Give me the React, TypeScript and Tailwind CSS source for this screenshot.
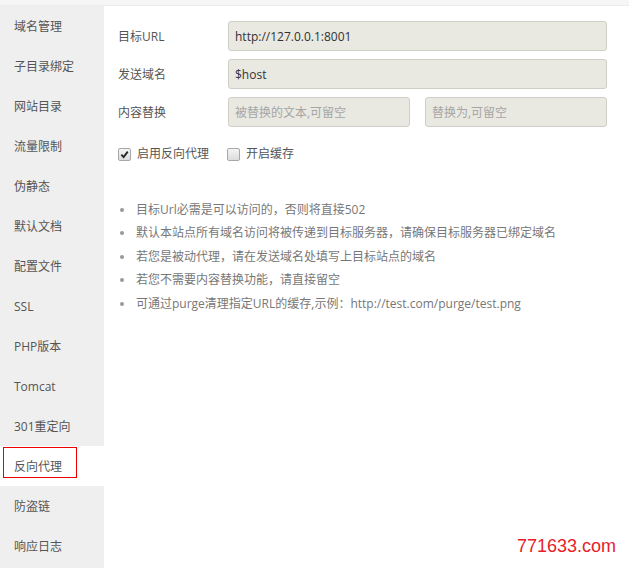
import React from "react";

const menu = [
  "域名管理",
  "子目录绑定",
  "网站目录",
  "流量限制",
  "伪静态",
  "默认文档",
  "配置文件",
  "SSL",
  "PHP版本",
  "Tomcat",
  "301重定向",
  "反向代理",
  "防盗链",
  "响应日志",
];

const tips = [
  "目标Url必需是可以访问的，否则将直接502",
  "默认本站点所有域名访问将被传递到目标服务器，请确保目标服务器已绑定域名",
  "若您是被动代理，请在发送域名处填写上目标站点的域名",
  "若您不需要内容替换功能，请直接留空",
  "可通过purge清理指定URL的缓存,示例：http://test.com/purge/test.png",
];

const font = {
  fontFamily: '"Open Sans", "Noto Sans CJK SC", sans-serif',
};

const Check = ({ checked }: { checked: boolean }) => (
  <span className="w-[13px] h-[13px] rounded-[2px] border border-[#a8a8a8] bg-gradient-to-b from-[#f4f4f4] to-[#dcdcdc] flex items-center justify-center">
    {checked && (
      <svg width="9" height="9" viewBox="0 0 10 10">
        <path d="M1.5 5.2 L4 7.8 L8.6 1.8" fill="none" stroke="#222" strokeWidth="2" />
      </svg>
    )}
  </span>
);

const Input = ({ value, placeholder, className }: { value?: string; placeholder?: string; className?: string }) => (
  <div
    className={
      "h-[30px] rounded-[3px] border border-[#cfcfc8] bg-[#e9e8e1] flex items-center px-[6px] pt-[1px] text-[12px] " +
      (value ? "text-[#333]" : "text-[#a6a6a6]") +
      " " +
      (className || "")
    }
  >
    {value || placeholder}
  </div>
);

export default function App() {
  return (
    <div className="w-[629px] h-[568px] bg-white flex flex-col relative overflow-hidden" style={font}>
      <div className="h-[6px] bg-[#f6f6f6] border-b border-[#ececec]" />
      <div className="flex flex-1">
        <div className="w-[104px] bg-[#efefef] flex flex-col">
          {menu.map((m) => (
            <div
              key={m}
              className={
                "h-[40px] flex items-center pl-[14px] pt-[2px] text-[12px] text-[#555] " +
                (m === "反向代理" ? "bg-white" : "")
              }
            >
              {m === "反向代理" ? (
                <span className="border border-[#e00] w-[74px] h-[31px] -ml-[11px] mt-[-10px] pl-[10px] pt-[10px]">{m}</span>
              ) : (
                m
              )}
            </div>
          ))}
        </div>
        <div className="flex-1 pl-[14px] pr-[22px] pt-[15px]">
          <div className="flex flex-col gap-[8px]">
            <div className="flex items-center">
              <span className="w-[110px] pt-[2px] text-[12px] text-[#555]">目标URL</span>
              <Input value="http://127.0.0.1:8001" className="flex-1" />
            </div>
            <div className="flex items-center">
              <span className="w-[110px] pt-[2px] text-[12px] text-[#555]">发送域名</span>
              <Input value="$host" className="flex-1" />
            </div>
            <div className="flex items-center">
              <span className="w-[110px] pt-[2px] text-[12px] text-[#555]">内容替换</span>
              <Input placeholder="被替换的文本,可留空" className="w-[182px]" />
              <Input placeholder="替换为,可留空" className="w-[182px] ml-[15px]" />
            </div>
          </div>
          <div className="flex items-center mt-[18px] text-[12px] text-[#555]">
            <Check checked />
            <span className="ml-[6px]">启用反向代理</span>
            <span className="ml-[18px]">
              <Check checked={false} />
            </span>
            <span className="ml-[6px]">开启缓存</span>
          </div>
          <ul className="mt-[35px] flex flex-col">
            {tips.map((t) => (
              <li key={t} className="h-[23.5px] flex items-center text-[12px] text-[#777]">
                <span className="w-[4px] h-[4px] rounded-full bg-[#999] ml-[2px] mr-[12px]" />
                {t}
              </li>
            ))}
          </ul>
        </div>
      </div>
      <div className="absolute right-[13px] bottom-[8px] text-[18px] text-[#e8202a]" style={{ fontFamily: '"Liberation Sans", sans-serif' }}>
        771633.com
      </div>
    </div>
  );
}
